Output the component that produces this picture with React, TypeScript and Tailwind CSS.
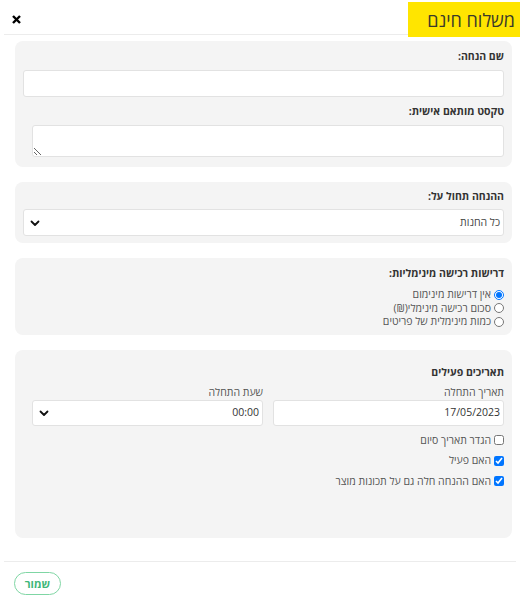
import React from 'react';

const Chevron: React.FC = () => (
  <svg width="10" height="10" viewBox="0 0 10 10" className="shrink-0">
    <path d="M1.5 3.5 L5 7 L8.5 3.5" fill="none" stroke="#111" strokeWidth="1.8" strokeLinecap="round" strokeLinejoin="round" />
  </svg>
);

const Card: React.FC<{ className?: string; children: React.ReactNode }> = ({ className = '', children }) => (
  <div className={`ml-[15px] mr-[8px] rounded-lg bg-[#f4f4f4] px-2 ${className}`}>{children}</div>
);

export default function App() {
  return (
    <div dir="rtl" className="w-[520px] h-[601px] bg-white text-[#333] font-['Open_Sans','Noto_Sans',sans-serif] flex flex-col">
      <header className="flex items-start justify-between h-[37px] pt-[2px] relative">
        <div className="absolute left-[4px] right-0 top-[34px] h-px bg-[#ececec]" />
        <div className="relative z-10 bg-[#ffe500] h-[35px] w-[112px] flex items-center pr-[5px] text-[18px] text-[#3a3a2a] leading-none">
          משלוח חינם
        </div>
        <button className="ml-[10px] mt-[11px] w-3 h-3 flex items-center justify-center">
          <svg width="9" height="9" viewBox="0 0 9 9">
            <path d="M1 1 L8 8 M8 1 L1 8" stroke="#000" strokeWidth="2.4" />
          </svg>
        </button>
      </header>

      <div className="flex flex-col gap-[15px] pt-[4px]">
        <Card className="pt-[7px] pb-[10px]">
          <div className="text-[10.5px] font-bold leading-[16px]">שם הנחה:</div>
          <input className="mt-[6px] w-full h-[27px] bg-white border border-[#e2e2e2] rounded-[3px] outline-none" />
          <div className="mt-[6px] text-[10.5px] font-bold leading-[16px]">טקסט מותאם אישית:</div>
          <div className="mt-[6px] pl-[9px]">
            <textarea dir="rtl" className="block w-full h-[32px] bg-white border border-[#e2e2e2] rounded-[3px] outline-none resize" />
          </div>
        </Card>

        <Card className="pt-[6px] pb-[7px]">
          <div className="text-[10.5px] font-bold leading-[16px]">ההנחה תחול על:</div>
          <div className="mt-[5px] h-[27px] bg-white border border-[#e2e2e2] rounded-[3px] flex items-center justify-between pr-[3px] pl-[6px] text-[10.5px] text-[#444]">
            <span>כל החנות</span>
            <Chevron />
          </div>
        </Card>

        <Card className="pt-[7px] pb-[6px]">
          <div className="text-[10.5px] font-bold leading-[16px]">דרישות רכישה מינימליות:</div>
          <div className="mt-[7px] flex flex-col text-[10.5px] text-[#555] leading-[13.5px]">
            {[
              ['אין דרישות מינימום', true],
              ['סכום רכישה מינימלי(₪)', false],
              ['כמות מינימלית של פריטים', false],
            ].map(([t, c]) => (
              <label key={t as string} className="flex items-center gap-[3px]">
                <input type="radio" name="min" defaultChecked={c as boolean} className="m-0 w-[10px] h-[10px]" />
                <span>{t as string}</span>
              </label>
            ))}
          </div>
        </Card>

        <Card className="h-[188px] pt-[14px]">
          <div className="text-[10.5px] font-bold leading-[16px]">תאריכים פעילים</div>
          <div className="mt-[5px] flex gap-[10px] pl-[9px] text-[10.5px] text-[#555]">
            <div className="flex-1">
              <div className="leading-[14px]">תאריך התחלה</div>
              <div className="mt-[1px] h-[26px] bg-white border border-[#e2e2e2] rounded-[3px] flex items-center pr-[3px] text-[#333]">17/05/2023</div>
            </div>
            <div className="flex-1">
              <div className="leading-[14px]">שעת התחלה</div>
              <div className="mt-[1px] h-[26px] bg-white border border-[#e2e2e2] rounded-[3px] flex items-center justify-between pr-[3px] pl-[6px] text-[#333]">
                <span>00:00</span>
                <Chevron />
              </div>
            </div>
          </div>
          <div className="mt-[7px] flex flex-col gap-[5.5px] text-[10.5px] text-[#555] leading-[15px]">
            {[
              ['הגדר תאריך סיום', false],
              ['האם פעיל', true],
              ['האם ההנחה חלה גם על תכונות מוצר', true],
            ].map(([t, c]) => (
              <label key={t as string} className="flex items-center gap-[3px]">
                <input type="checkbox" defaultChecked={c as boolean} className="m-0 w-[10px] h-[10px]" />
                <span>{t as string}</span>
              </label>
            ))}
          </div>
        </Card>
      </div>

      <div className="mt-[23px] mx-[4px] h-px bg-[#ececec]" />
      <div className="pt-[10px] pl-[14px] flex justify-end">
        <button className="w-[47px] h-[23px] rounded-full border border-[#7fd6a4] text-[#3fb779] text-[11px] font-bold leading-none">
          שמור
        </button>
      </div>
    </div>
  );
}
